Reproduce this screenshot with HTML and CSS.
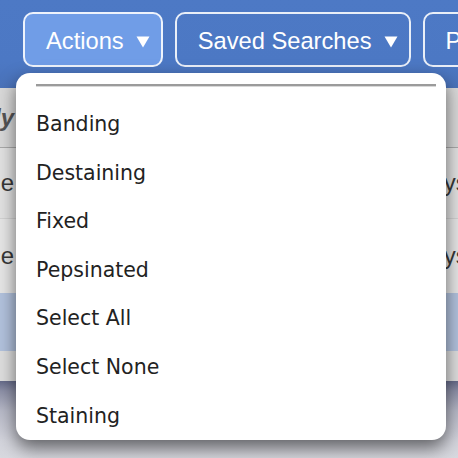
FILE: index.html
```html
<!DOCTYPE html>
<html>
<head>
<meta charset="utf-8">
<link rel="stylesheet" href="styles.css">
</head>
<body>
<div class="page">
  <div class="toolbar">
    <div class="btn btn-active"><span>Actions</span><svg class="caret" width="14" height="12" viewBox="0 0 14 12"><polygon points="0.5,0.5 13.5,0.5 7,11.5" fill="#fff"/></svg></div>
    <div class="btn"><span>Saved Searches</span><svg class="caret" width="14" height="12" viewBox="0 0 14 12"><polygon points="0.5,0.5 13.5,0.5 7,11.5" fill="#fff"/></svg></div>
    <div class="btn"><span>Print</span></div>
  </div>
  <div class="table">
    <div class="row row-head"><div class="cell-left"><span>Study</span></div></div>
    <div class="row row-a"><div class="cell-left"><span>Stage</span></div><div class="cell-right">Days</div></div>
    <div class="row row-b"><div class="cell-left"><span>Stage</span></div><div class="cell-right">Days</div></div>
    <div class="row row-sel"></div>
    <div class="row row-c"></div>
  </div>
  <div class="footer"></div>

  <div class="menu">
    <div class="sep"></div>
    <ul class="items">
      <li>Banding</li>
      <li>Destaining</li>
      <li>Fixed</li>
      <li>Pepsinated</li>
      <li>Select All</li>
      <li>Select None</li>
      <li>Staining</li>
    </ul>
  </div>
</div>
</body>
</html>
```

FILE: styles.css
```css
html, body {
  margin: 0;
  padding: 0;
}
body {
  width: 458px;
  height: 458px;
  overflow: hidden;
  background: #d6d7de;
  font-family: "Liberation Sans", Arial, sans-serif;
}
.page {
  position: relative;
  width: 458px;
  height: 458px;
  display: flex;
  flex-direction: column;
}
.toolbar {
  height: 88px;
  box-sizing: border-box;
  padding: 12px 0 0 23px;
  display: flex;
  gap: 12px;
  align-items: flex-start;
  background: linear-gradient(#4d79c5 0, #4c78c4 62px, #4a72b9 88px);
  flex: none;
}
.btn {
  flex: none;
  height: 55px;
  box-sizing: border-box;
  border: 2px solid rgba(255, 255, 255, 0.88);
  border-radius: 10px;
  padding: 3px 11px 0 21px;
  display: flex;
  align-items: center;
  gap: 12px;
  color: #fff;
  font-size: 23.7px;
  white-space: nowrap;
}
.btn-active {
  background: #709de7;
}
.caret {
  margin-top: 1px;
  flex: none;
}
.table {
  flex: none;
  display: flex;
  flex-direction: column;
  font-size: 24px;
  color: #383838;
}
.row {
  display: flex;
  align-items: center;
  justify-content: space-between;
  overflow: hidden;
}
.row-head {
  height: 59px;
  background: #d9d9d9;
  border-bottom: 1px solid #a9a9a9;
  color: #555;
  font-weight: bold;
  font-style: italic;
}
.row-a {
  height: 70px;
  background: #e2e2e2;
}
.row-b {
  height: 74px;
  background: #e6e6e6;
  border-top: 1px solid #d2d2d2;
}
.row-sel {
  height: 58px;
  background: #b2c2dd;
}
.row-c {
  height: 30px;
  background: #dedede;
}
.cell-left {
  width: 14px;
  display: flex;
  justify-content: flex-end;
  white-space: nowrap;
}
.cell-right {
  width: 45px;
  white-space: nowrap;
}
.footer {
  flex: 1;
  background: linear-gradient(#666b8a 0, #8d90a7 10px, #b7b9c7 30px, #d3d4dc 60px, #d8d9df 78px);
}
.menu {
  position: absolute;
  left: 16px;
  top: 73px;
  width: 430px;
  background: #fff;
  border-radius: 14px;
  box-shadow: 0 8px 18px rgba(0, 0, 0, 0.55);
  padding: 11px 0 0;
}
.sep {
  margin: 0 10px 0 20px;
  border-top: 2px solid #9b9b9b;
  border-bottom: 1px solid #d8d8d8;
}
.items {
  list-style: none;
  margin: 0;
  padding: 13px 0 0;
}
.items li {
  height: 48.6px;
  line-height: 48.6px;
  padding-left: 20px;
  font-family: "DejaVu Sans", Verdana, sans-serif;
  font-size: 20.5px;
  color: #222;
}
```
